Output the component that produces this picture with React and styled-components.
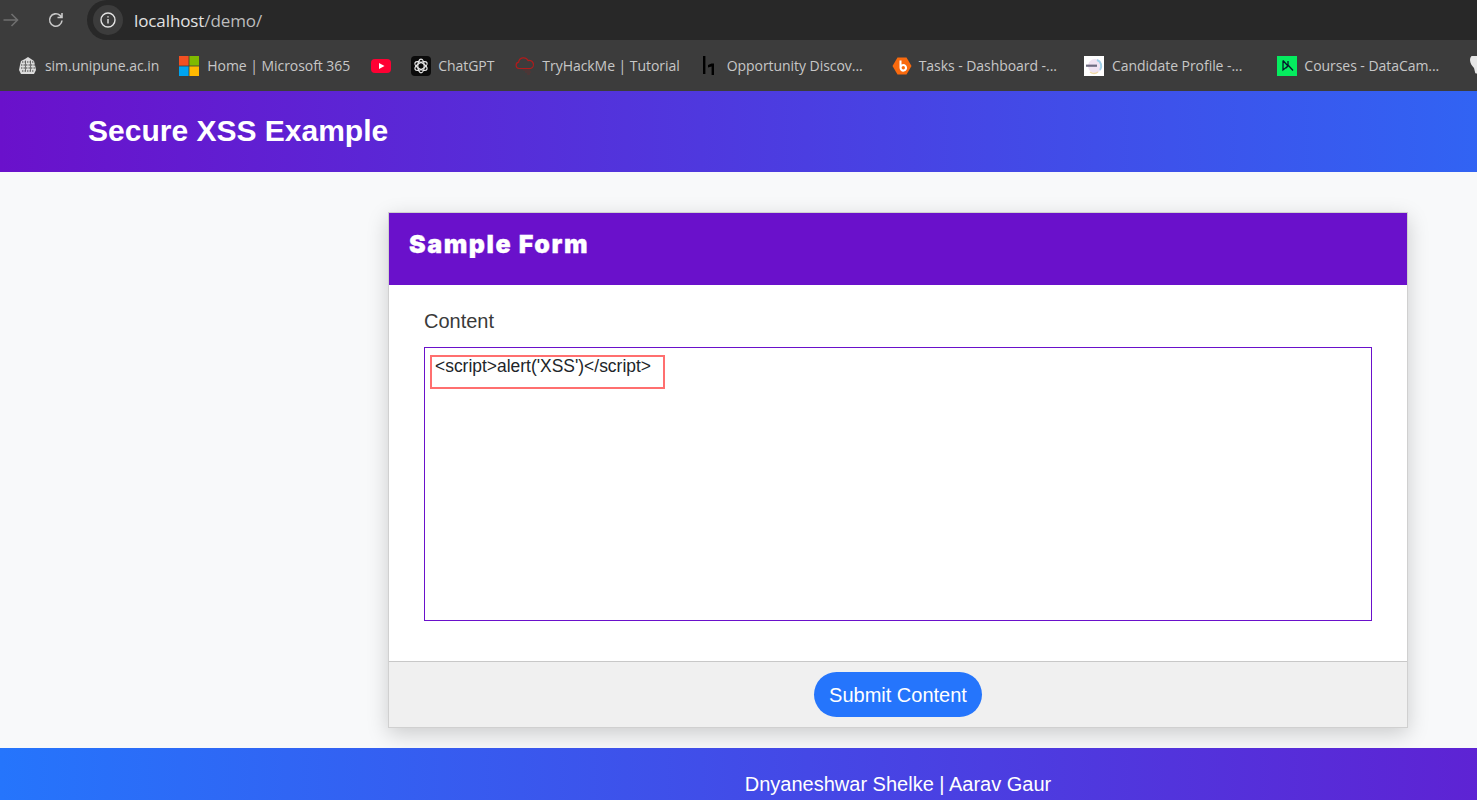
import React from "react";
import styled, { createGlobalStyle } from "styled-components";

const Global = createGlobalStyle`
  html, body { margin: 0; padding: 0; height: 800px; overflow: hidden; background: #f8f9fa; }
  body { font-family: "Liberation Sans", Arial, sans-serif; }
  * { box-sizing: border-box; }
`;
const Page = styled.div`display:flex;flex-direction:column;height:800px;overflow:hidden;`;
const Toolbar = styled.div`height:40px;background:#3c3c3c;display:flex;align-items:center;flex:none;`;
const NavIcon = styled.span`display:flex;flex:none;margin-left:${p => p.$ml}px;color:${p => p.$c};`;
const AddressBar = styled.div`flex:1;height:40px;margin-left:22px;background:#282828;border-radius:20px 0 0 20px;display:flex;align-items:center;padding-left:6px;`;
const InfoBadge = styled.span`width:30px;height:30px;border-radius:50%;background:#3c3c3c;display:flex;align-items:center;justify-content:center;color:#e3e3e3;`;
const Url = styled.span`margin-left:11px;font:17px "Open Sans",sans-serif;color:#e3e3e3;letter-spacing:-.1px;span{color:#bdbdbd;}`;
const Bookmarks = styled.div`height:51px;background:#3c3c3c;display:flex;align-items:center;flex:none;overflow:hidden;`;
const Bookmark = styled.div`display:flex;align-items:center;gap:${p => p.$gap ?? 7}px;flex:none;margin-left:${p => p.$ml}px;font:14px "Open Sans",sans-serif;color:#c7c7c7;white-space:nowrap;letter-spacing:-.05px;`;
const Header = styled.header`width:1796px;height:81px;flex:none;background:linear-gradient(90deg,#6a11cb,#2575fc);display:flex;align-items:center;padding-left:88px;padding-bottom:2px;`;
const Title = styled.h1`margin:0;color:#fff;font-size:30px;line-height:34px;font-weight:700;`;
const Main = styled.main`flex:none;height:576px;display:flex;justify-content:flex-end;padding:40px 69px 20px 0;`;
const Card = styled.section`width:1020px;height:516px;background:#fff;border:1px solid #d0d0d0;box-shadow:0 6px 20px rgba(0,0,0,.18);display:flex;flex-direction:column;`;
const CardHead = styled.div`height:72px;flex:none;background:#6a11cb;display:flex;align-items:center;padding:0 0 10px 20px;`;
const CardTitle = styled.h2`margin:0;color:#fff;font:900 25px Inter,"Liberation Sans",sans-serif;letter-spacing:1.55px;-webkit-text-stroke:.3px #fff;`;
const CardBody = styled.div`flex:1;padding:24px 35px 40px;display:flex;flex-direction:column;`;
const Label = styled.label`font-size:20px;line-height:24px;color:#3a3a3a;margin-bottom:14px;`;
const FieldWrap = styled.div`position:relative;height:274px;`;
const Field = styled.textarea`display:block;width:100%;height:100%;border:1px solid #6a11cb;background:#fff;padding:8px 10px;margin:0;font:17.45px/20px "Liberation Sans",Arial,sans-serif;color:#212529;resize:none;outline:none;`;
const Annotation = styled.div`position:absolute;left:6px;top:8px;width:235px;height:34px;border:2px solid #ff6f6f;pointer-events:none;`;
const CardFoot = styled.div`height:66px;flex:none;background:#f0f0f0;border-top:1px solid #c8c8c8;display:flex;justify-content:center;align-items:center;padding-bottom:1px;`;
const Submit = styled.button`height:45px;width:168px;border:0;border-radius:23px;background:#2575fc;color:#fff;font:20px "Liberation Sans",Arial,sans-serif;padding:2px 0 0;`;
const Footer = styled.footer`width:1796px;flex:none;height:52px;background:linear-gradient(90deg,#2575fc,#6a11cb);color:#fff;display:flex;justify-content:center;padding-top:24px;font-size:20px;line-height:24px;`;

const Ic = styled.svg`display:block;flex:none;`;
const Unipune = () => (<Ic width="20" height="20" viewBox="0 0 20 20"><path d="M7 3l3-2 3 2 3 2 1 4 1 5-2 4H3l-2-4 1-5 1-4z" fill="#dcdcdc"/><path d="M4 6h12M3 9h14M3 12h14M4 15h12" stroke="#3f3f3f" strokeWidth="1.2" strokeDasharray="1.4 1.1"/><path d="M7.5 4.5v11M12.5 4.5v11" stroke="#555" strokeWidth=".8"/></Ic>);
const Ms = () => (<Ic width="20" height="20" viewBox="0 0 20 20"><rect width="9.6" height="9.6" fill="#f25022"/><rect x="10.4" width="9.6" height="9.6" fill="#7fba00"/><rect y="10.4" width="9.6" height="9.6" fill="#00a4ef"/><rect x="10.4" y="10.4" width="9.6" height="9.6" fill="#ffb900"/></Ic>);
const Yt = () => (<Ic width="20" height="20" viewBox="0 0 20 20"><rect y="3" width="20" height="14" rx="4" fill="#ff0033"/><path d="M8 7l5.5 3L8 13z" fill="#fff"/></Ic>);
const Gpt = () => (<Ic width="20" height="20" viewBox="0 0 20 20"><rect width="20" height="20" rx="4" fill="#0b0b0b"/><g fill="none" stroke="#e8e8e8" strokeWidth="1.2"><ellipse cx="10" cy="10" rx="3.2" ry="6.8"/><ellipse cx="10" cy="10" rx="3.2" ry="6.8" transform="rotate(60 10 10)"/><ellipse cx="10" cy="10" rx="3.2" ry="6.8" transform="rotate(120 10 10)"/></g></Ic>);
const Thm = () => (<Ic width="20" height="20" viewBox="0 0 20 20"><path d="M4 12.5a3.2 3.2 0 0 1-.4-6.3A5 5 0 0 1 13 4.6a3.8 3.8 0 0 1 2.6 7.9H4z" fill="none" stroke="#b01c1c" strokeWidth="1.2"/><path d="M8 14h7M10 16h6M12 18h3" stroke="#5c3030" strokeWidth="1.2"/></Ic>);
const H1 = () => (<Ic width="20" height="20" viewBox="0 0 20 20"><path d="M4 0h2.4v18H4zM9 9l3.5-1.5H15V19h-2.4V10.5L9 11.5z" fill="#000"/></Ic>);
const Bee = () => (<Ic width="20" height="20" viewBox="0 0 20 20"><path d="M5.5 1.5h9L19.5 10l-5 8.5h-9L.5 10z" fill="#f96a0e"/><path d="M7.5 4.5h2v4a3.8 3.8 0 1 1-2 3.3z" fill="#fff"/><circle cx="11.3" cy="11.8" r="1.7" fill="#f96a0e"/></Ic>);
const Cand = () => (<Ic width="20" height="20" viewBox="0 0 20 20"><rect width="20" height="20" fill="#fff"/><circle cx="11" cy="10" r="7" fill="#efe3f2"/><path d="M13 4a6.5 6.5 0 0 1 3 10" stroke="#9fd0e8" strokeWidth="2" fill="none"/><path d="M6 16a7 7 0 0 0 8 0" stroke="#f0d9a8" strokeWidth="1.5" fill="none"/><rect x="2" y="8.6" width="11" height="2.2" fill="#6d6a80"/></Ic>);
const Dc = () => (<Ic width="20" height="20" viewBox="0 0 20 20"><rect width="20" height="20" fill="#05ec5f"/><path d="M6 4.5v9.5l5-4-5-5.5M11 5v5l-2 2M11 9l5 5.5" fill="none" stroke="#05192d" strokeWidth="1.3"/></Ic>);
const Tooth = () => (<Ic width="20" height="20" viewBox="0 0 20 20"><path d="M3 0h5c2 0 4 1 4 4 0 3-1 4-2 6l-1 6c0 2-3 2-3 0l-1-4c-2-2-4-5-4-8 0-2 1-4 2-4z" fill="#e6e6e6"/></Ic>);

export default function App() {
  return (
    <Page>
      <Global />
      <Toolbar>
        <NavIcon $ml={2} $c="#6f6f6f">
          <Ic width="18" height="18" viewBox="0 0 18 18" fill="none" stroke="currentColor" strokeWidth="1.6"><path d="M1.5 9h14M9.5 3l6 6-6 6"/></Ic>
        </NavIcon>
        <NavIcon $ml={27} $c="#c8c8c8">
          <Ic width="18" height="18" viewBox="0 0 18 18" fill="none" stroke="currentColor" strokeWidth="1.6"><path d="M15 9.5A6.2 6.2 0 1 1 13 4.4L15 6.4M15 2v4.5h-4.5"/></Ic>
        </NavIcon>
        <AddressBar>
          <InfoBadge>
            <Ic width="16" height="16" viewBox="0 0 16 16" fill="none" stroke="currentColor" strokeWidth="1.4"><circle cx="8" cy="8" r="7"/><path d="M8 7v4.5M8 4.2v1.4"/></Ic>
          </InfoBadge>
          <Url>localhost<span>/demo/</span></Url>
        </AddressBar>
      </Toolbar>
      <Bookmarks>
        <Bookmark $ml={18}><Unipune />sim.unipune.ac.in</Bookmark>
        <Bookmark $ml={20} $gap={8}><Ms />Home | Microsoft 365</Bookmark>
        <Bookmark $ml={21}><Yt /></Bookmark>
        <Bookmark $ml={20}><Gpt />ChatGPT</Bookmark>
        <Bookmark $ml={21}><Thm />TryHackMe | Tutorial</Bookmark>
        <Bookmark $ml={19} $gap={8}><H1 />Opportunity Discov...</Bookmark>
        <Bookmark $ml={29}><Bee />Tasks - Dashboard -...</Bookmark>
        <Bookmark $ml={27} $gap={8}><Cand />Candidate Profile -...</Bookmark>
        <Bookmark $ml={35}><Dc />Courses - DataCam...</Bookmark>
        <Bookmark $ml={30}><Tooth /></Bookmark>
      </Bookmarks>
      <Header><Title>Secure XSS Example</Title></Header>
      <Main>
        <Card>
          <CardHead><CardTitle>Sample Form</CardTitle></CardHead>
          <CardBody>
            <Label htmlFor="content">Content</Label>
            <FieldWrap>
              <Field id="content" readOnly defaultValue="<script>alert('XSS')</script>" />
              <Annotation />
            </FieldWrap>
          </CardBody>
          <CardFoot><Submit>Submit Content</Submit></CardFoot>
        </Card>
      </Main>
      <Footer>Dnyaneshwar Shelke | Aarav Gaur</Footer>
    </Page>
  );
}
